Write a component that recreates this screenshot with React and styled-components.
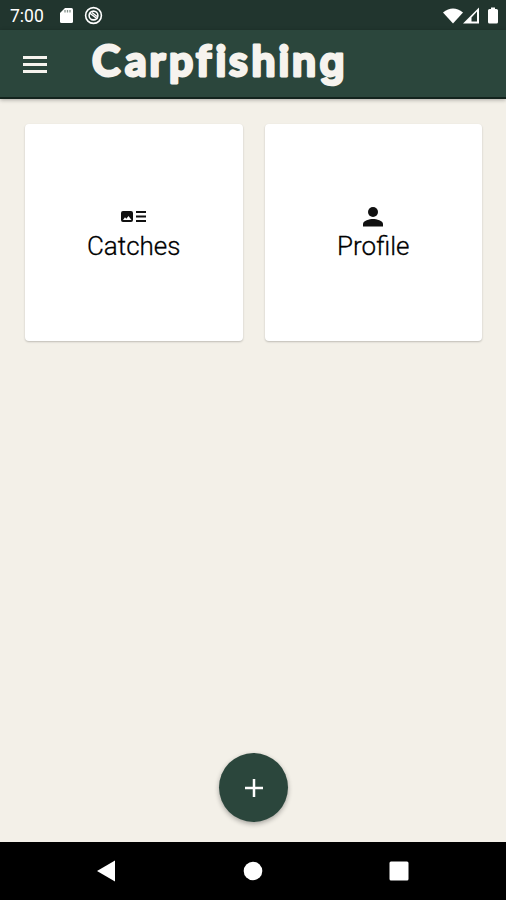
import React from 'react';
import styled, { createGlobalStyle } from 'styled-components';

const GlobalStyle = createGlobalStyle`
  * {
    box-sizing: border-box;
  }

  body {
    margin: 0;
    font-family: Roboto, sans-serif;
    background-color: #f3f0e8;
  }
`;

const Screen = styled.div`
  display: flex;
  flex-direction: column;
  height: 900px;
  overflow: hidden;
  background-color: #f3f0e8;
`;

const StatusBar = styled.div`
  display: flex;
  align-items: center;
  height: 30px;
  padding: 1px 7px 0 10px;
  color: #fff;
  background-color: #21352e;
`;

const Clock = styled.span`
  width: 49px;
  font-size: 17.5px;
  line-height: 20px;
`;

const StatusIcon = styled.svg`
  display: block;
  flex: none;
  width: ${(props) => props.$width}px;
  height: 20px;
  margin-right: ${(props) => props.$gap || 0}px;
`;

const Spacer = styled.div`
  flex: 1;
`;

const AppBar = styled.header`
  display: flex;
  align-items: flex-start;
  flex: none;
  height: 69px;
  padding-left: 23px;
  background-color: #2b463c;
  border-bottom: 2px solid #13231d;
  box-shadow: 0 1px 4px rgba(0, 0, 0, 0.3);
`;

const MenuButton = styled.button`
  display: flex;
  flex-direction: column;
  gap: 4px;
  width: 24px;
  margin: 26px 43px 0 0;
  padding: 0;
  border: 0;
  background: none;
`;

const MenuLine = styled.span`
  height: 3px;
  background-color: #f6f3ee;
`;

/* round stroke softens the letter ends */
const Logo = styled.svg`
  display: block;
  width: 262px;
  height: 65px;
  font-family: Lato, sans-serif;
  font-size: 42.5px;
  font-weight: 700;
  font-variant-ligatures: none;
  fill: #f6f3ee;
  stroke: #f6f3ee;
  stroke-width: 2.8px;
  stroke-linejoin: round;
`;

const LogoTail = styled.tspan`
  font-family: Inter, sans-serif;
  font-size: 40px;
  font-weight: 600;
`;

const Content = styled.main`
  flex: 1;
  display: flex;
  flex-direction: column;
  align-items: center;
  justify-content: space-between;
  padding: 25px 24px 20px 25px;
`;

const Cards = styled.div`
  display: grid;
  grid-template-columns: 1fr 1fr;
  gap: 22px;
  width: 100%;
`;

const Card = styled.div`
  display: flex;
  flex-direction: column;
  align-items: center;
  height: 217px;
  padding-top: 79px;
  background-color: #fff;
  border-radius: 4px;
  box-shadow: 0 1px 2px rgba(0, 0, 0, 0.22);
`;

const CardIcon = styled.svg`
  display: block;
  width: 28px;
  height: 28px;
  fill: #111;
`;

const CardLabel = styled.span`
  font-size: 26px;
  font-weight: 300;
  line-height: 30px;
  color: #000;
  -webkit-text-stroke: 0.3px #000;
`;

const AddButton = styled.button`
  display: flex;
  align-items: center;
  justify-content: center;
  width: 69px;
  height: 69px;
  padding: 0;
  border: 0;
  border-radius: 50%;
  background-color: #2b463c;
  box-shadow: 0 2px 5px rgba(0, 0, 0, 0.32);
`;

const NavBar = styled.nav`
  display: flex;
  align-items: center;
  justify-content: space-between;
  flex: none;
  height: 58px;
  padding: 0 97px;
  background-color: #000;
`;

const NavIcon = styled.svg`
  display: block;
  width: ${(props) => props.$width}px;
  height: 22px;
  fill: #fff;
`;

function App() {
  return (
    <>
      <GlobalStyle />
      <Screen>
        <StatusBar>
          <Clock>7:00</Clock>
          {/* SD card */}
          <StatusIcon $width={15} $gap={10} viewBox="0 0 15 20">
            <path d="M6 2h6.500q1.500 0 1.500 1.500v12q0 1.500-1.500 1.500h-10q-1.500 0-1.500-1.500V7z" fill="#fff" />
            <path d="M6 4v2.500M8.500 4v2.500M11 4v2.500" stroke="#84918b" strokeWidth="1.300" />
          </StatusIcon>
          <StatusIcon $width={20} viewBox="0 0 20 20">
            <circle cx="9.500" cy="9.500" r="7.900" fill="none" stroke="#fff" strokeWidth="1.600" />
            <circle cx="9.500" cy="9.500" r="4.400" fill="none" stroke="#fff" strokeWidth="1.600" />
            <path d="M5.500 7l8 6M8 6.500l5 4" stroke="#fff" strokeWidth="1.500" />
          </StatusIcon>
          <Spacer />
          {/* wifi, signal, battery */}
          <StatusIcon $width={20} viewBox="0 0 20 20">
            <path d="M0 6.500Q10-1.500 20 6.500L10 17.500z" fill="#fff" />
          </StatusIcon>
          <StatusIcon $width={16} $gap={8} viewBox="0 0 16 20">
            <path fillRule="evenodd" d="M0 17.500L16 1.500v16zM8.500 11.500v4H14V5.500z" fill="#fff" />
          </StatusIcon>
          <StatusIcon $width={12} viewBox="0 0 12 20">
            <path d="M4 1.500h4v1.500h1.500q1.500 0 1.500 1.500V16q0 1.500-1.500 1.500h-7Q1 17.500 1 16V4.500Q1 3 2.500 3H4z" fill="#fff" />
          </StatusIcon>
        </StatusBar>

        <AppBar>
          <MenuButton aria-label="Menu">
            <MenuLine />
            <MenuLine />
            <MenuLine />
          </MenuButton>
          <Logo viewBox="0 0 262 65">
            <text x="2 35 59.500 79 106 125.500 139 161.500 188.500 202 229.500" y="46">
              Carpfishin<LogoTail>g</LogoTail>
            </text>
          </Logo>
        </AppBar>

        <Content>
          <Cards>
            <Card>
              <CardIcon viewBox="0 0 28 28">
                <path
                  fillRule="evenodd"
                  d="M3 8h8q2 0 2 2v7q0 2-2 2H3q-2 0-2-2v-7q0-2 2-2zM3 17h8.500l-3-4-2.200 2.800-1.300-1.600z"
                />
                <path d="M16 8h10v2H16zM16 12.500h10v2H16zM16 17h10v2H16z" />
              </CardIcon>
              <CardLabel>Catches</CardLabel>
            </Card>
            <Card>
              <CardIcon viewBox="0 0 28 28">
                <circle cx="14" cy="9" r="5" />
                <path d="M4 23.500v-2.500c0-3.300 6.500-5 10-5s10 1.700 10 5v2.500z" />
              </CardIcon>
              <CardLabel>Profile</CardLabel>
            </Card>
          </Cards>
          <AddButton aria-label="Add">
            <svg width="18" height="18" viewBox="0 0 18 18">
              <path d="M9 0v18M0 9h18" stroke="#fff" strokeWidth="2.500" />
            </svg>
          </AddButton>
        </Content>

        <NavBar>
          <NavIcon $width={18} viewBox="0 0 18 22">
            <path d="M0 11L18 .5v21z" />
          </NavIcon>
          <NavIcon $width={22} viewBox="0 0 22 22">
            <circle cx="12" cy="11" r="9.300" />
          </NavIcon>
          <NavIcon $width={20} viewBox="0 0 20 22">
            <rect x="0.500" y="1.500" width="19" height="19" rx="1.500" />
          </NavIcon>
        </NavBar>
      </Screen>
    </>
  );
}

export default App;
